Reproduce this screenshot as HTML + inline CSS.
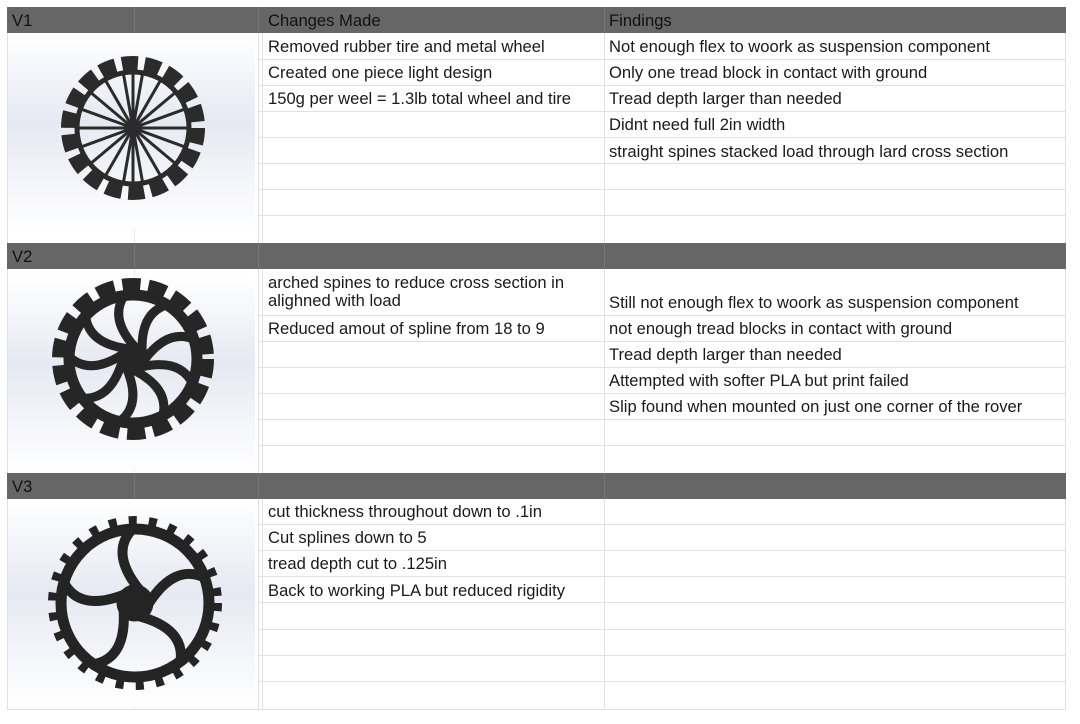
<!DOCTYPE html>
<html><head><style>
body{margin:0;width:1080px;height:724px;background:#fff;position:relative;overflow:hidden;font-family:"Liberation Sans",Arial,sans-serif;font-size:16.6px;color:#1a1a1a}
.a{position:absolute}
.hd{position:absolute;left:7px;width:1059px;height:26px;background:#666;color:#111}
.hd span{position:absolute;top:4px}
.hl{position:absolute;height:1px;background:#e0e0e0}
.vl{position:absolute;width:1px;background:#e0e0e0}
.t{position:absolute;white-space:nowrap;line-height:18px}
.img{position:absolute;left:8px;width:247px;background:linear-gradient(180deg,#fff 0%,#e6e9f2 45%,#fff 100%)}
</style></head><body>
<div class="vl" style="left:7px;top:7px;height:703px"></div>
<div class="vl" style="left:1065px;top:7px;height:703px"></div>
<div class="vl" style="left:258px;top:7px;height:703px"></div>
<div class="vl" style="left:262px;top:7px;height:703px"></div>
<div class="vl" style="left:604px;top:7px;height:703px"></div>
<div class="vl" style="left:134px;top:7px;height:703px;background:#ececec"></div>

<div class="hl" style="left:258px;width:808px;top:59px"></div>
<div class="hl" style="left:258px;width:808px;top:85px"></div>
<div class="hl" style="left:258px;width:808px;top:111px"></div>
<div class="hl" style="left:258px;width:808px;top:137px"></div>
<div class="hl" style="left:258px;width:808px;top:163px"></div>
<div class="hl" style="left:258px;width:808px;top:189px"></div>
<div class="hl" style="left:258px;width:808px;top:215px"></div>
<div class="hl" style="left:258px;width:808px;top:315px"></div>
<div class="hl" style="left:258px;width:808px;top:341px"></div>
<div class="hl" style="left:258px;width:808px;top:367px"></div>
<div class="hl" style="left:258px;width:808px;top:393px"></div>
<div class="hl" style="left:258px;width:808px;top:419px"></div>
<div class="hl" style="left:258px;width:808px;top:445px"></div>
<div class="hl" style="left:258px;width:808px;top:524px"></div>
<div class="hl" style="left:258px;width:808px;top:550px"></div>
<div class="hl" style="left:258px;width:808px;top:576px"></div>
<div class="hl" style="left:258px;width:808px;top:602px"></div>
<div class="hl" style="left:258px;width:808px;top:629px"></div>
<div class="hl" style="left:258px;width:808px;top:655px"></div>
<div class="hl" style="left:258px;width:808px;top:681px"></div>
<div class="hl" style="left:7px;width:1059px;top:709px"></div>

<div class="img" style="top:34px;height:196px"></div>
<div class="img" style="top:277px;height:193px"></div>
<div class="img" style="top:500px;height:206px"></div>

<svg class="a" style="left:0;top:0" width="1080" height="724">
 <g transform="translate(133,128)" fill="none" stroke="#2b2b2b">
  <circle r="65" stroke-width="14" stroke-dasharray="16 6.7"/>
  <circle r="56" stroke-width="5"/>
  <g stroke-width="3">
   <line x1="-56" y1="0" x2="56" y2="0"/><line x1="0" y1="-56" x2="0" y2="56"/>
   <line x1="-52.6" y1="-19.2" x2="52.6" y2="19.2"/><line x1="-52.6" y1="19.2" x2="52.6" y2="-19.2"/>
   <line x1="-42.9" y1="-36" x2="42.9" y2="36"/><line x1="-42.9" y1="36" x2="42.9" y2="-36"/>
   <line x1="-28" y1="-48.5" x2="28" y2="48.5"/><line x1="-28" y1="48.5" x2="28" y2="-48.5"/>
   <line x1="-9.7" y1="-55" x2="9.7" y2="55"/><line x1="-9.7" y1="55" x2="9.7" y2="-55"/>
  </g>
  <circle r="7" fill="#2b2b2b" stroke-width="1"/>
 </g>
 <g transform="translate(133,359)" fill="none" stroke="#262626">
  <circle r="74" stroke-width="14" stroke-dasharray="18 8"/>
  <circle r="64" stroke-width="11"/>
  <g stroke-width="9" stroke-linecap="round">
   <path d="M12 0 Q35 -30 60 -20"/><path d="M12 0 Q35 -30 60 -20" transform="rotate(40)"/>
   <path d="M12 0 Q35 -30 60 -20" transform="rotate(80)"/><path d="M12 0 Q35 -30 60 -20" transform="rotate(120)"/>
   <path d="M12 0 Q35 -30 60 -20" transform="rotate(160)"/><path d="M12 0 Q35 -30 60 -20" transform="rotate(200)"/>
   <path d="M12 0 Q35 -30 60 -20" transform="rotate(240)"/><path d="M12 0 Q35 -30 60 -20" transform="rotate(280)"/>
   <path d="M12 0 Q35 -30 60 -20" transform="rotate(320)"/>
  </g>
  <circle r="14" fill="#262626" stroke-width="1"/>
 </g>
 <g transform="translate(135,603)" fill="none" stroke="#242424">
  <circle r="82" stroke-width="10" stroke-dasharray="8 12"/>
  <circle r="74" stroke-width="11"/>
  <g stroke-width="10">
   <path d="M14 0 Q40 -40 70 -25"/><path d="M14 0 Q40 -40 70 -25" transform="rotate(72)"/>
   <path d="M14 0 Q40 -40 70 -25" transform="rotate(144)"/><path d="M14 0 Q40 -40 70 -25" transform="rotate(216)"/>
   <path d="M14 0 Q40 -40 70 -25" transform="rotate(288)"/>
  </g>
  <circle r="18" fill="#242424" stroke-width="1"/>
 </g>
</svg>

<div class="hd" style="top:7px"><span style="left:5px">V1</span><span style="left:261px">Changes Made</span><span style="left:602px">Findings</span></div>
<div class="hd" style="top:243px"><span style="left:5px">V2</span></div>
<div class="hd" style="top:473px"><span style="left:5px">V3</span></div>
<div class="vl" style="left:134px;top:7px;height:26px;background:#777"></div>
<div class="vl" style="left:258px;top:7px;height:26px;background:#777"></div>
<div class="vl" style="left:604px;top:7px;height:26px;background:#777"></div>
<div class="vl" style="left:134px;top:243px;height:26px;background:#777"></div>
<div class="vl" style="left:258px;top:243px;height:26px;background:#777"></div>
<div class="vl" style="left:604px;top:243px;height:26px;background:#777"></div>
<div class="vl" style="left:134px;top:473px;height:26px;background:#777"></div>
<div class="vl" style="left:258px;top:473px;height:26px;background:#777"></div>
<div class="vl" style="left:604px;top:473px;height:26px;background:#777"></div>

<div class="t" style="left:268px;top:38px">Removed rubber tire and metal wheel</div>
<div class="t" style="left:268px;top:64px">Created one piece light design</div>
<div class="t" style="left:268px;top:90px">150g per weel = 1.3lb total wheel and tire</div>
<div class="t" style="left:609px;top:38px">Not enough flex to woork as suspension component</div>
<div class="t" style="left:609px;top:64px">Only one tread block in contact with ground</div>
<div class="t" style="left:609px;top:90px">Tread depth larger than needed</div>
<div class="t" style="left:609px;top:116px">Didnt need full 2in width</div>
<div class="t" style="left:609px;top:143px">straight spines stacked load through lard cross section</div>
<div class="t" style="left:268px;top:274px">arched spines to reduce cross section in<br>alighned with load</div>
<div class="t" style="left:268px;top:320px">Reduced amout of spline from 18 to 9</div>
<div class="t" style="left:609px;top:294px">Still not enough flex to woork as suspension component</div>
<div class="t" style="left:609px;top:320px">not enough tread blocks in contact with ground</div>
<div class="t" style="left:609px;top:346px">Tread depth larger than needed</div>
<div class="t" style="left:609px;top:372px">Attempted with softer PLA but print failed</div>
<div class="t" style="left:609px;top:398px">Slip found when mounted on just one corner of the rover</div>
<div class="t" style="left:268px;top:503px">cut thickness throughout down to .1in</div>
<div class="t" style="left:268px;top:529px">Cut splines down to 5</div>
<div class="t" style="left:268px;top:555px">tread depth cut to .125in</div>
<div class="t" style="left:268px;top:582px">Back to working PLA but reduced rigidity</div>
</body></html>
